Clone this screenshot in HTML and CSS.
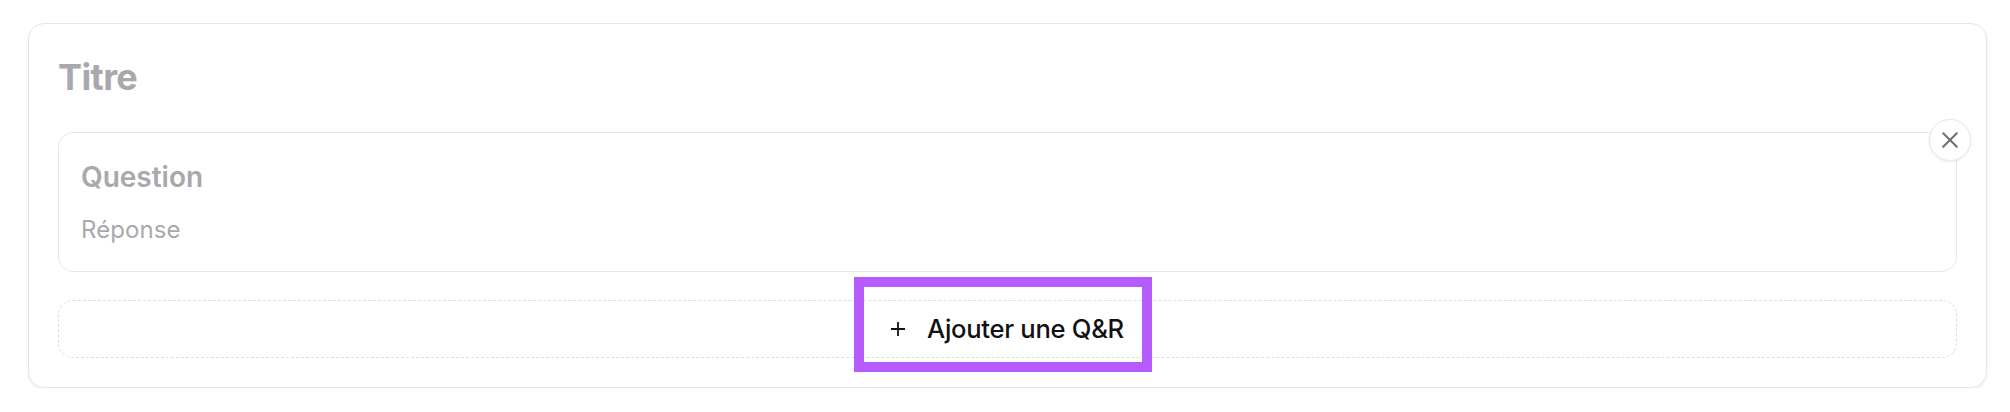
FILE: index.html
```html
<!DOCTYPE html>
<html lang="fr">
<head>
<meta charset="utf-8">
<title>Q&amp;R</title>
<link rel="stylesheet" href="styles.css">
</head>
<body>
  <section class="card">
    <h2 class="title">Titre</h2>
    <div class="qa">
      <div class="qa-question">Question</div>
      <div class="qa-answer">Réponse</div>
      <button class="qa-remove" type="button" aria-label="Supprimer">
        <svg viewBox="0 0 16 16" width="16" height="16" aria-hidden="true">
          <path d="M1.2 1.2 L14.8 14.8 M14.8 1.2 L1.2 14.8" stroke="currentColor" stroke-width="2" stroke-linecap="round" fill="none"/>
        </svg>
      </button>
    </div>
    <div class="add-row">
      <button class="add-btn" type="button">
        <svg class="add-icon" viewBox="0 0 14 14" width="14" height="14" aria-hidden="true">
          <path d="M7 0 V14 M0 7 H14" stroke="currentColor" stroke-width="1.8" fill="none"/>
        </svg>
        <span>Ajouter une Q&amp;R</span>
      </button>
    </div>
  </section>
</body>
</html>
```

FILE: styles.css
```css
* { box-sizing: border-box; }

html, body {
  background: #ffffff;
}

body {
  margin: 0;
  padding: 23px 23px 0 28px;
  font-family: Inter, "Noto Sans", "Liberation Sans", sans-serif;
}

.card {
  width: 1959px;
  border: 1px solid #e6e6ea;
  border-radius: 16px;
  background: #ffffff;
  box-shadow: 0 2px 3px rgba(0, 0, 0, 0.07);
  padding: 30px 29px 29px 29px;
  display: flex;
  flex-direction: column;
}

.title {
  margin: 0 0 32px 0;
  font-size: 36px;
  line-height: 46px;
  font-weight: 700;
  color: #a9a9ad;
  letter-spacing: -0.6px;
}

.qa {
  position: relative;
  border: 1px solid #e6e6ea;
  border-radius: 15px;
  padding: 27px 22px 27px 22px;
  display: flex;
  flex-direction: column;
  gap: 22px;
  margin-bottom: 28px;
}

.qa-question {
  font-size: 28px;
  line-height: 34px;
  font-weight: 600;
  color: #a9a9ad;
}

.qa-answer {
  font-size: 24px;
  line-height: 28px;
  font-weight: 400;
  color: #a9a9ad;
  letter-spacing: 0.1px;
}

.qa-remove {
  position: absolute;
  top: -14px;
  right: -15px;
  width: 42px;
  height: 42px;
  border-radius: 50%;
  border: 1px solid #e8e8ec;
  background: #ffffff;
  box-shadow: 0 1px 3px rgba(0, 0, 0, 0.08);
  color: #6e6e73;
  display: flex;
  align-items: center;
  justify-content: center;
  padding: 0;
  cursor: pointer;
}

.add-row {
  height: 58px;
  border: 1px dashed #dedee2;
  border-radius: 15px;
  display: flex;
  align-items: center;
  justify-content: center;
}

.add-btn {
  position: relative;
  display: inline-flex;
  align-items: center;
  gap: 22px;
  padding: 0;
  border: none;
  background: transparent;
  font-family: inherit;
  font-size: 25.6px;
  line-height: 32px;
  font-weight: 500;
  letter-spacing: -0.3px;
  color: #111114;
  cursor: pointer;
}

.add-icon {
  flex: none;
  color: #111114;
}

.add-btn::after {
  content: "";
  position: absolute;
  left: -37px;
  right: -28px;
  top: -36px;
  bottom: -27px;
  border: 10px solid #b65cff;
  pointer-events: none;
}
```
